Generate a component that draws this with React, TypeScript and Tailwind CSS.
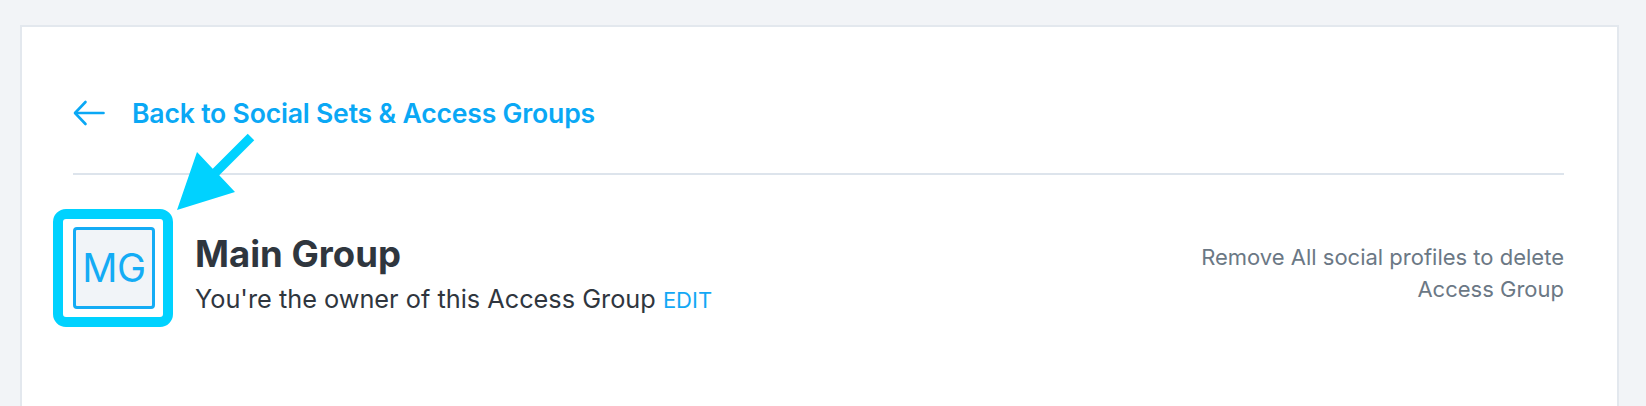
import { useMemo } from "react";

const font = { fontFamily: "Inter, 'Noto Sans', sans-serif" };

function BackArrow() {
  return (
    <svg width="32" height="26" viewBox="0 0 32 26" fill="none" stroke="currentColor" strokeWidth="2.6" strokeLinecap="round" strokeLinejoin="round">
      <path d="M30.5 13H2.5" />
      <path d="M12.5 2L2 13l10.5 11" />
    </svg>
  );
}

// call-out arrow pointing at the avatar, drawn in page coordinates
function CalloutArrow() {
  const points = useMemo(() => {
    const tip = [177, 210];
    const w1 = [197, 152];
    const w2 = [235, 192];
    const b = [(w1[0] + w2[0]) / 2, (w1[1] + w2[1]) / 2];
    const t = [251, 137];
    const dx = t[0] - b[0];
    const dy = t[1] - b[1];
    const len = Math.hypot(dx, dy);
    const n = [-dy / len * 4.6, dx / len * 4.6];
    const p = [
      [t[0] - n[0], t[1] - n[1]],
      [b[0] - n[0], b[1] - n[1]],
      w1,
      tip,
      w2,
      [b[0] + n[0], b[1] + n[1]],
      [t[0] + n[0], t[1] + n[1]],
    ];
    return p.map((q) => q.join(",")).join(" ");
  }, []);
  return (
    <svg className="absolute left-0 top-0 pointer-events-none" width="300" height="240" viewBox="0 0 300 240">
      <polygon points={points} fill="#00d2ff" />
    </svg>
  );
}

export default function App() {
  return (
    <div className="relative min-h-[406px] bg-[#f2f4f7] pt-[25px] pl-[20px] pr-[27px]" style={font}>
      <div className="h-[381px] bg-white border-2 border-b-0 border-[#e3e8ee] pl-[51px] pr-[53px] pt-[73px]">
        <a className="flex items-center gap-[27px] text-[#0aa8f5] h-[26px] cursor-pointer">
          <BackArrow />
          <span className="text-[26.6px] leading-[26px] font-semibold tracking-[-0.2px]">Back to Social Sets &amp; Access Groups</span>
        </a>

        <div className="mt-[47px] h-[2px] bg-[#dde4ec]" />

        <div className="mt-[52px] flex items-start">
          <div className="relative shrink-0">
            <div className="w-[82px] h-[82px] rounded-[4px] border-[3px] border-[#14acf5] bg-[#f1f4f8] flex items-center justify-center text-[#14acf5] text-[39px] tracking-[-0.5px]">
              MG
            </div>
            <div className="absolute -left-[20px] -right-[18px] -top-[18px] -bottom-[18px] rounded-[13px] border-[10px] border-[#00d2ff]" />
          </div>

          <div className="ml-[40px] flex-1 pt-[5px]">
            <h1 className="text-[36.5px] leading-[44px] font-bold text-[#2f363e]">Main Group</h1>
            <p className="mt-[8px] text-[25.3px] leading-[30px] text-[#2f363e]">
              You're the owner of this Access Group{" "}
              <span className="text-[#12a8f5] uppercase text-[22px] cursor-pointer">Edit</span>
            </p>
          </div>

          <div className="mt-[14px] text-right text-[22px] leading-[32px] text-[#6b7885]">
            Remove All social profiles to delete
            <br />
            Access Group
          </div>
        </div>
      </div>
      <CalloutArrow />
    </div>
  );
}
